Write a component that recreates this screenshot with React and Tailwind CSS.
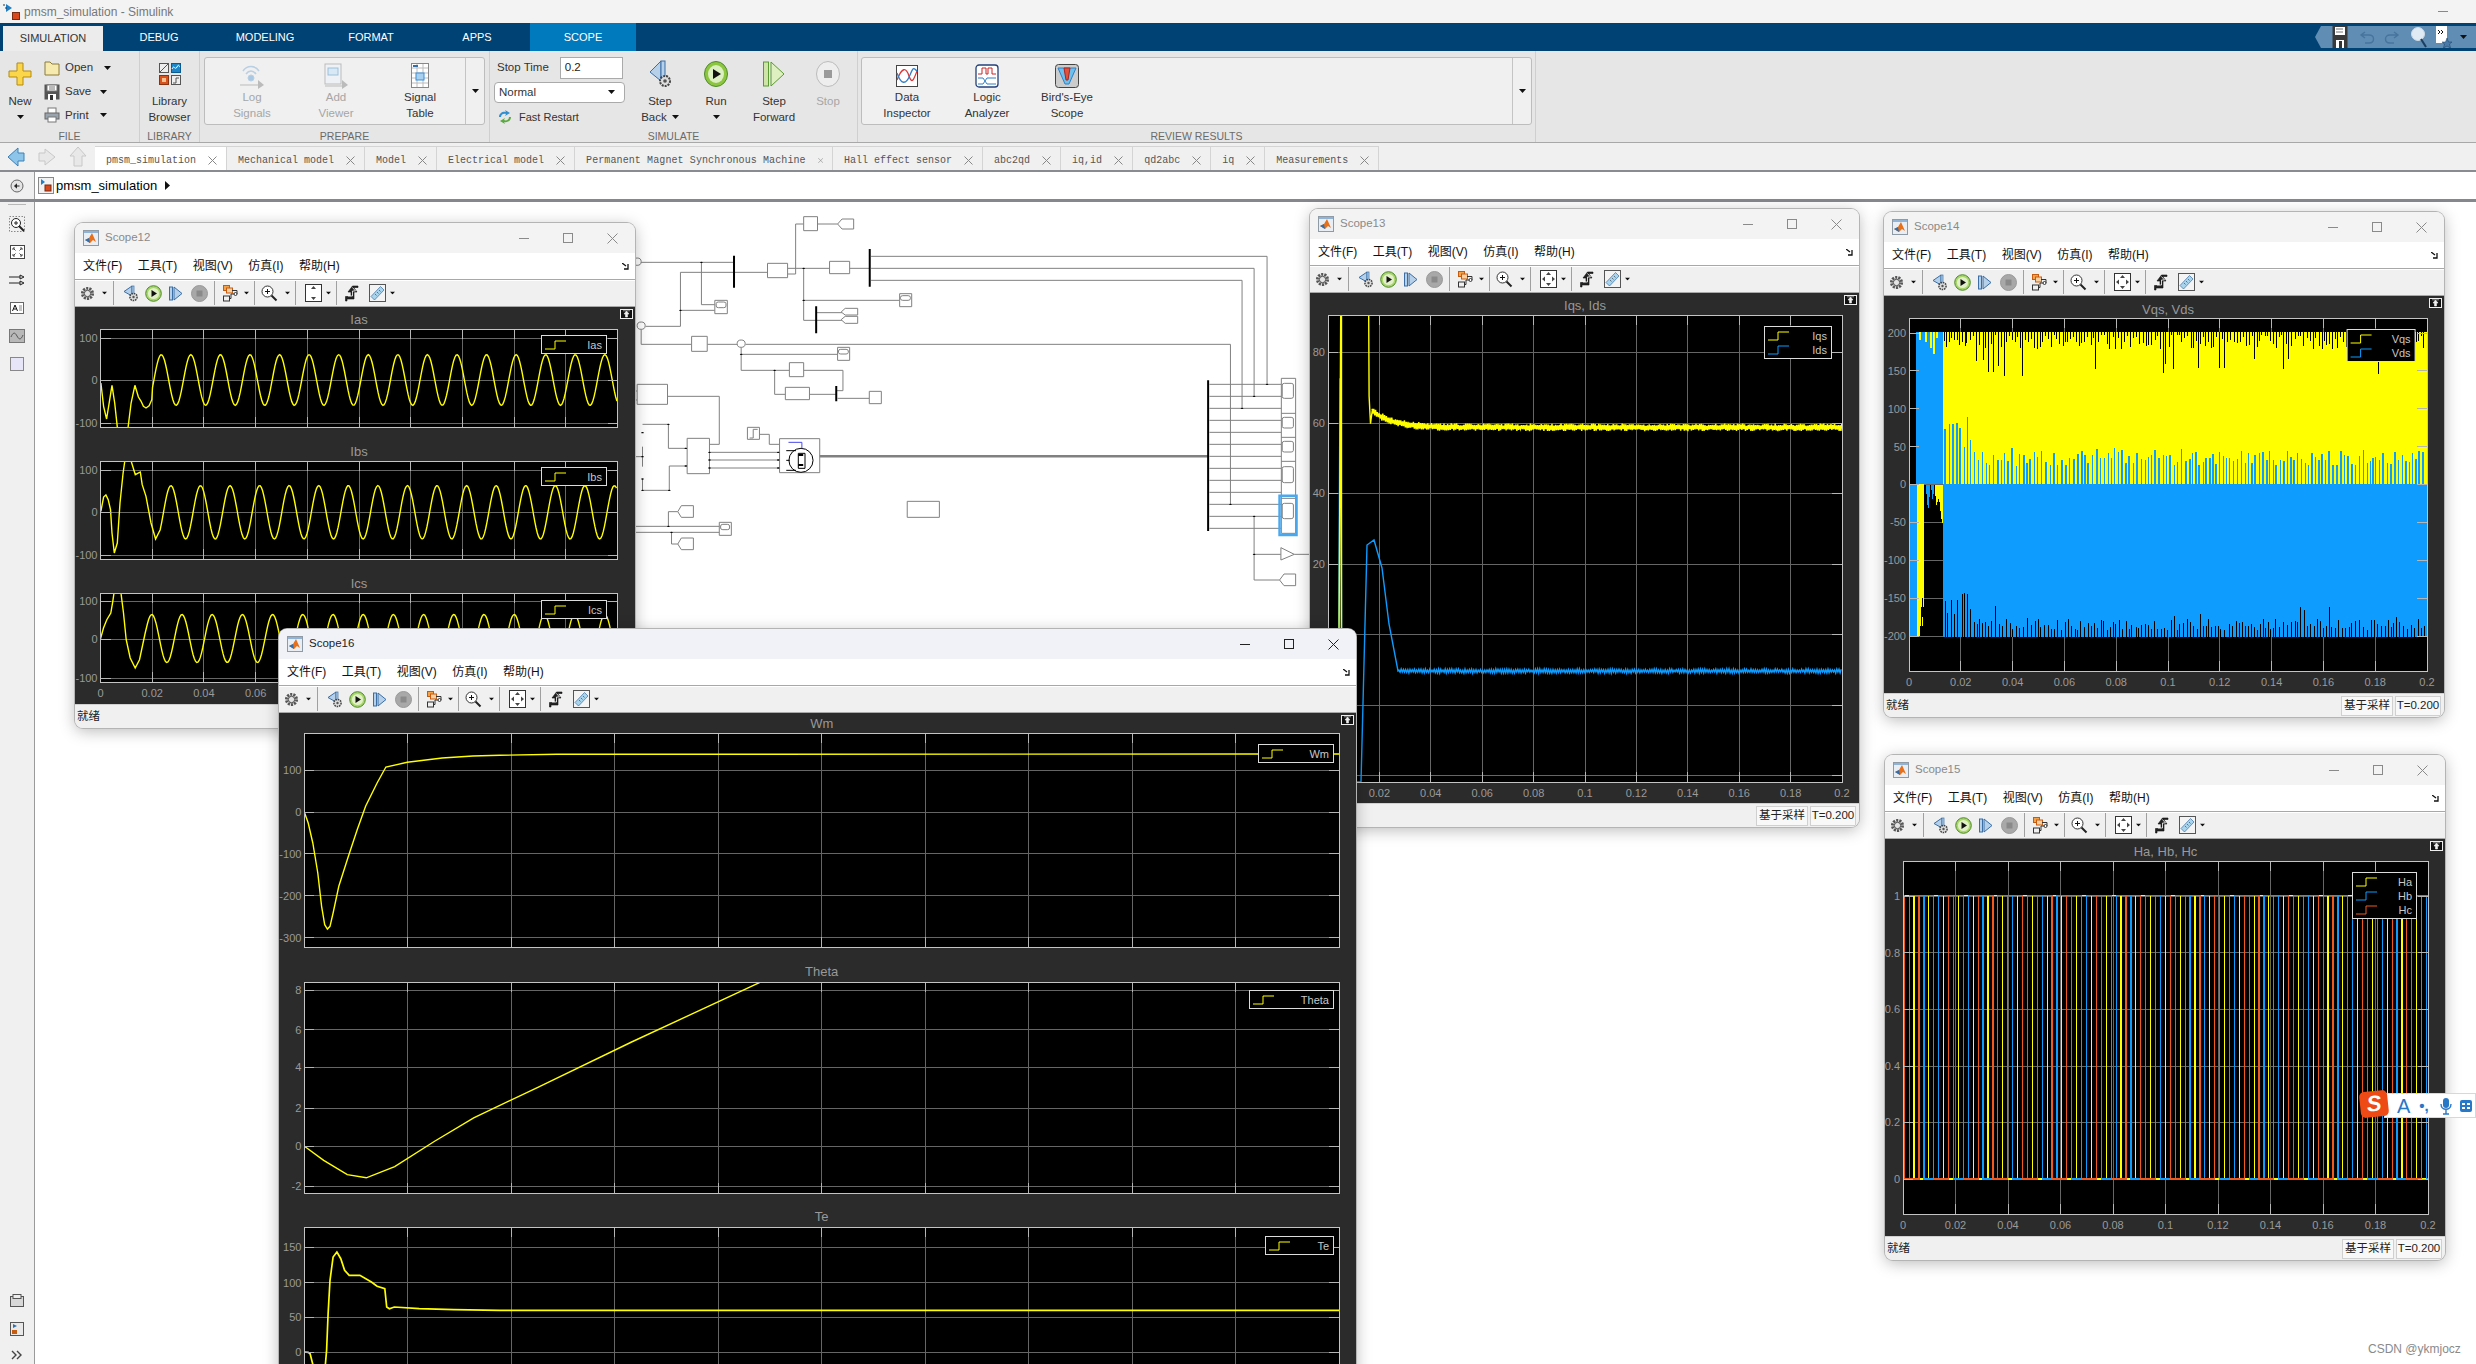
import { useMemo } from "react";

const YEL = "#ffff00";
const BLU = "#0f9cff";
const ORG = "#f05a1f";

// small seeded random so the noisy traces stay the same every render
const makeRand = (seed) => {
  let s = seed;
  return () => {
    s = (s * 16807) % 2147483647;
    return (s - 1) / 2147483646;
  };
};

const toPath = (pts) =>
  pts.map((p, i) => `${i ? "L" : "M"}${p[0].toFixed(1)} ${p[1].toFixed(1)}`).join("");

// points read from the reference crops -> plot coordinates
const conv = (arr, ox, oy, sx, sy) => arr.map(([x, y]) => [(x - ox) / sx, (y - oy) / sy]);

const sine = (start, end, x0, T, c, a) => {
  const out = [];
  for (let x = start; x <= end; x += 1.2) {
    out.push([x, c - a * Math.cos((2 * Math.PI * (x - x0)) / T)]);
  }
  return out;
};

const iasPath = toPath([
  ...conv([[107, 520], [114, 590], [122, 628], [130, 570], [136, 527], [143, 580], [150, 652], [150, 670], [178, 670], [178, 652], [186, 580], [196, 527], [205, 562], [212, 575], [218, 590], [225, 595], [233, 588], [240, 570]], 106, 358, 2.613, 3),
  ...sine(52, 517, 60.8, 29.57, 51, 25.3),
]);
const ibsPath = toPath([
  ...conv([[107, 905], [114, 862], [120, 856], [126, 870], [132, 900], [136, 970], [142, 1030], [150, 1000], [157, 880], [165, 790], [170, 750], [185, 750], [197, 795], [210, 787], [215, 825], [225, 860], [238, 940], [250, 988], [262, 960]], 106, 754, 2.613, 3),
  ...sine(60, 517, 70.4, 29.57, 51.3, 26.7),
]);
const icsPath = toPath([
  ...conv([[91, 237], [100, 205], [110, 180], [122, 160], [128, 125], [132, 96], [152, 96], [160, 160], [168, 240], [180, 295], [195, 325], [208, 300], [225, 220]], 91, 100, 3, 3),
  ...sine(47, 517, 51.3, 30.2, 45.5, 24),
]);

const wmPath = toPath(
  conv([[90, 578], [100, 610], [112, 670], [125, 760], [135, 860], [143, 915], [150, 928], [157, 920], [165, 880], [180, 800], [205, 710], [228, 630], [250, 560], [280, 490], [303, 442], [359, 428], [450, 415], [530, 409], [600, 407], [750, 404], [2800, 403]], 90, 340, 2.613, 3)
);
const thetaPath = toPath(
  conv([[192.8, 726], [205, 735], [220, 744], [232, 746], [250, 739], [275, 723], [300, 708], [340, 689], [400, 660], [484, 621], [500, 613]], 192.8, 622, 0.6333, 0.6333)
);
const tePath = toPath(
  conv([[90, 515], [100, 516], [105, 520], [112, 552], [120, 700], [140, 700], [145, 552], [148, 510], [152, 400], [157, 300], [165, 230], [175, 215], [185, 235], [195, 270], [207, 285], [235, 285], [265, 305], [280, 318], [300, 325], [305, 380], [312, 385], [325, 380], [390, 385], [480, 388], [600, 390], [2800, 390]], 90, 140, 2.613, 3)
);

const iqsPath = () => {
  const r = makeRand(71);
  const pts = conv([[108, 1400], [113, 346], [115, 1400], [115, 346], [190, 346], [191, 590], [195, 672], [200, 630]], 78, 346, 2.75, 3);
  for (let x = 44, i = 0; x < 514; x += 0.9, i++) {
    const base = 112.4 - 17 * Math.exp(-(x - 44) / 20);
    pts.push([x, base + (i % 2 ? 1 : -1) * (1.6 + r() * 2.2)]);
  }
  return toPath(pts);
};

const idsPath = () => {
  const r = makeRand(33);
  const pts = [[10, 467], [12, 64], [13, 64], [14, 467], [33, 467], [39, 230], [46, 225], [54, 253], [61, 309], [70, 356]];
  for (let x = 71, i = 0; x < 514; x += 1.1, i++) {
    pts.push([x, 356 + (i % 2 ? 1 : -1) * (0.8 + r() * 1.4)]);
  }
  return toPath(pts);
};

// Vqs, Vds drawn as stripes: the real trace is just a blur of switching
const VqsTrace = () => {
  const { black, spikes, lower } = useMemo(() => {
    const r = makeRand(11);
    const black = [];
    const spikes = [];
    const lower = [];
    for (let x = 35; x < 517; x += 1.9 + r() * 1.7) {
      const big = r() > 0.9;
      black.push(`M${x.toFixed(1)} 14V${(14 + (big ? 22 + r() * 22 : 3 + r() * 14)).toFixed(1)}`);
    }
    for (let x = 36; x < 517; x += 2.6 + r() * 2) {
      const h = x < 62 ? 30 + r() * 42 : 18 + r() * 18;
      spikes.push(`M${x.toFixed(1)} 166V${(166 - h).toFixed(1)}`);
    }
    for (let x = 36; x < 517; x += 2.3 + r() * 2) {
      const h = x < 62 ? 18 + r() * 28 : 6 + r() * (r() > 0.85 ? 26 : 12);
      lower.push(`M${x.toFixed(1)} 318.5V${(318.5 - h).toFixed(1)}`);
    }
    return { black: black.join(""), spikes: spikes.join(""), lower: lower.join("") };
  }, []);
  return (
    <g shapeRendering="crispEdges">
      <rect x="34" y="14.3" width="484" height="152" fill={YEL} />
      <path d={black} stroke="#000" strokeWidth="1" />
      <path d={spikes} stroke={BLU} strokeWidth="1.5" />
      <rect x="34" y="166" width="484" height="152.5" fill={BLU} />
      <path d={lower} stroke="#000" strokeWidth="1" />
      <rect x="6.5" y="14.3" width="27.5" height="152" fill={BLU} />
      <path d="M11 14V22M17 14V24M22 14V30M25 14V36M28 14V20" stroke={YEL} strokeWidth="1.2" />
      <path d="M0.5 35V166" stroke={YEL} strokeWidth="1" />
      <rect x="0" y="166" width="8" height="152.5" fill={BLU} />
      <path d="M8 166H15V280L13 318H8Z" fill={YEL} />
      <path d="M14 280L13 318H11L13 280Z" fill="#000" />
      <path d="M17 167H21L20 192L18 185ZM22 167H25L24 185Z" fill={BLU} />
      <path d="M26 167H34V205H33L30 180L27 188Z" fill={YEL} />
    </g>
  );
};

const hallWave = (offset, start) => {
  const half = 14.785;
  let level = start;
  let d = `M0 ${level ? 34.7 : 318}`;
  for (let x = offset; x < 525; x += half) {
    d += `H${x.toFixed(1)}`;
    level = !level;
    d += `V${level ? 34.7 : 318}`;
  }
  return d + "H525";
};

const Plot = ({ id, w, h, px, py, pw, ph, title, titleY, yTicks, xLabels, legend, lx, ly, lw, children }) => {
  const divX = Array.from({ length: 9 }, (_, i) => px + (pw * (i + 1)) / 10);
  return (
    <svg width={w} height={h} className="block shrink-0" fontFamily="Liberation Sans, sans-serif">
      <defs>
        <clipPath id={id}>
          <rect x={px} y={py} width={pw} height={ph} />
        </clipPath>
      </defs>
      <text x={px + pw / 2} y={titleY} fontSize="13" fill="#999" textAnchor="middle">{title}</text>
      <rect x={px} y={py} width={pw} height={ph} fill="#000" />
      <g stroke="#666" shapeRendering="crispEdges">
        {divX.map((x) => <line key={x} x1={x} x2={x} y1={py} y2={py + ph} />)}
        {yTicks.map((t) => <line key={t[0]} x1={px} x2={px + pw} y1={py + t[1]} y2={py + t[1]} />)}
      </g>
      <g clipPath={`url(#${id})`} fill="none">
        <g transform={`translate(${px} ${py})`}>{children}</g>
      </g>
      <g stroke="#b5b5b5" shapeRendering="crispEdges">
        {divX.map((x) => (
          <g key={x}>
            <line x1={x} x2={x} y1={py} y2={py + 10} />
            <line x1={x} x2={x} y1={py + ph - 10} y2={py + ph} />
          </g>
        ))}
        {yTicks.map((t) => (
          <g key={t[0]}>
            <line x1={px} x2={px + 10} y1={py + t[1]} y2={py + t[1]} />
            <line x1={px + pw - 10} x2={px + pw} y1={py + t[1]} y2={py + t[1]} />
          </g>
        ))}
        <rect x={px} y={py} width={pw} height={ph} fill="none" stroke="#c4c4c4" />
      </g>
      <g fontSize="11" fill="#9a9a9a">
        {yTicks.map((t) => (
          <text key={t[0]} x={px - 3} y={py + t[1] + 4} textAnchor="end">{t[0]}</text>
        ))}
        {xLabels &&
          ["0", "0.02", "0.04", "0.06", "0.08", "0.1", "0.12", "0.14", "0.16", "0.18", "0.2"].map((l, i) => (
            <text key={l} x={px + (pw * i) / 10} y={py + ph + 15} textAnchor="middle">{l}</text>
          ))}
      </g>
      {legend && (
        <g>
          <rect x={lx + 0.5} y={ly + 0.5} width={lw} height={4 + legend.length * 14} fill="#000" stroke="#dcdcdc" />
          {legend.map((l, i) => {
            const y = ly + 10 + i * 14;
            return (
              <g key={l[0]}>
                <path d={`M${lx + 4} ${y + 4}H${lx + 14}V${y - 4}H${lx + 25}`} stroke={l[1]} fill="none" />
                <text x={lx + lw - 4} y={y + 4} fontSize="11" fill="#c8c8c8" textAnchor="end">{l[0]}</text>
              </g>
            );
          })}
        </g>
      )}
    </svg>
  );
};

const Trace = ({ d, color = YEL, width = 1.4 }) => <path d={d} stroke={color} strokeWidth={width} strokeLinejoin="miter" />;

const Caret = ({ className = "" }) => (
  <svg width="7" height="4" viewBox="0 0 7 4" className={className}>
    <path d="M0 0H7L3.5 4Z" fill="#111" />
  </svg>
);

const MatlabIcon = () => (
  <svg width="16" height="16" viewBox="0 0 16 16">
    <rect x="0.5" y="0.5" width="15" height="15" fill="#e8eef4" stroke="#8e9aa6" />
    <rect x="1" y="1" width="14" height="2" fill="#8fb4d8" />
    <path d="M2 10L6 8L9 3L13 12L10 10L7 13Z" fill="#e8701a" />
    <path d="M2 10L6 8L7 13Z" fill="#2f6fb0" />
  </svg>
);

const Gear = () => (
  <svg width="15" height="15" viewBox="0 0 16 16">
    <circle cx="8" cy="8" r="5.5" fill="#d0d0d0" stroke="#555" strokeWidth="3" strokeDasharray="2.2 1.2" />
    <circle cx="8" cy="8" r="3.4" fill="#e4e4e4" stroke="#444" />
  </svg>
);

const ToolBack = () => (
  <svg width="16" height="17" viewBox="0 0 16 17">
    <path d="M9 1V11L1 6.5Z" fill="#b6d0ea" stroke="#3a6ea5" />
    <rect x="9" y="1" width="2" height="10" fill="#b6d0ea" stroke="#3a6ea5" strokeWidth="0.7" />
    <circle cx="10.5" cy="12" r="3.6" fill="#ddd" stroke="#444" strokeWidth="1.5" strokeDasharray="1.6 0.8" />
    <circle cx="10.5" cy="12" r="1.2" fill="#555" />
  </svg>
);

const ToolPlay = () => (
  <svg width="17" height="17" viewBox="0 0 17 17">
    <circle cx="8.5" cy="8.5" r="7.8" fill="#a9d66a" stroke="#4f8a2c" />
    <circle cx="8.5" cy="8.5" r="5.6" fill="#e2f0c8" />
    <path d="M6.5 5L12 8.5L6.5 12Z" fill="#111" />
  </svg>
);

const ToolStep = () => (
  <svg width="14" height="15" viewBox="0 0 14 15">
    <rect x="0.5" y="1" width="3" height="13" fill="#b6d0ea" stroke="#3a6ea5" />
    <path d="M5 1L13 7.5L5 14Z" fill="#b6d0ea" stroke="#3a6ea5" />
  </svg>
);

const ToolStop = () => (
  <svg width="17" height="17" viewBox="0 0 17 17">
    <circle cx="8.5" cy="8.5" r="8" fill="#a8a8a8" stroke="#999" />
    <rect x="5.5" y="5.5" width="6" height="6" fill="#8a8a8a" />
  </svg>
);

const ToolBlocks = () => (
  <svg width="17" height="17" viewBox="0 0 17 17" fill="none">
    <rect x="1.5" y="0.5" width="6" height="5" fill="#f4a24a" stroke="#c55a11" />
    <rect x="4.5" y="3" width="6" height="5" fill="#f8d0a0" stroke="#c55a11" />
    <rect x="1.5" y="11" width="6" height="5" stroke="#333" />
    <path d="M10 5.5H15V9H9M9 9V13.5H7.5" stroke="#333" />
    <circle cx="13.5" cy="9" r="1.5" fill="#fff" stroke="#333" />
  </svg>
);

const ToolZoom = () => (
  <svg width="17" height="17" viewBox="0 0 17 17" fill="none">
    <circle cx="6.5" cy="6.5" r="5.5" fill="#fff" stroke="#333" />
    <path d="M4 6.5H9M6.5 4V9" stroke="#111" />
    <path d="M10.5 10.5L15.5 15.5" stroke="#222" strokeWidth="2" />
  </svg>
);

const ToolFit = ({ vertical }) => (
  <svg width="17" height="18" viewBox="0 0 17 18">
    <rect x="0.5" y="0.5" width="16" height="17" fill="#fff" stroke="#333" />
    <path d="M8.5 2L6 5H11ZM8.5 16L6 13H11Z" fill="#444" />
    {!vertical && <path d="M2 9L5 6.5V11.5ZM15 9L12 6.5V11.5Z" fill="#444" />}
  </svg>
);

const ToolTrigger = () => (
  <svg width="14" height="17" viewBox="0 0 14 17">
    <path d="M7.5 1H13V2.5H9V3L12 7H9V14H2V16H0.5V11.5H6V7H3Z" fill="#222" stroke="#111" strokeWidth="0.6" />
    <path d="M7.5 2.5L10.5 6H7.5V11H3" stroke="#fff" strokeWidth="0.8" fill="none" />
  </svg>
);

const ToolRuler = () => (
  <svg width="17" height="18" viewBox="0 0 17 18">
    <rect x="0.5" y="0.5" width="16" height="17" fill="#f4f4f4" stroke="#555" />
    <path d="M2 12.5L11.5 2.5L15 6L5.5 16Z" fill="#a8d4ee" stroke="#3a6ea5" strokeWidth="0.7" />
    <path d="M6 10L7.5 11.5M8 8L9.5 9.5M10 6L11.5 7.5" stroke="#333" strokeWidth="0.6" />
  </svg>
);

const Sep = ({ className }) => <div className={`h-[24px] w-px bg-[#a0a0a0] ${className}`} />;

const ScopeToolbar = ({ vertical }) => (
  <div className="flex h-[27px] shrink-0 items-center border-b border-[#a8a8a8] bg-[#f0f0f0] shadow-[inset_0_1px_0_#fff]">
    <div className="flex w-[24px] justify-center"><Gear /></div>
    <Caret className="ml-[2px] scale-75" />
    <Sep className="ml-[5px]" />
    <div className="ml-[6px] flex w-[22px] justify-center"><ToolBack /></div>
    <div className="flex w-[22px] justify-center"><ToolPlay /></div>
    <div className="flex w-[24px] justify-center"><ToolStep /></div>
    <div className="flex w-[22px] justify-center"><ToolStop /></div>
    <Sep className="ml-[4px]" />
    <div className="ml-[5px] flex w-[20px] justify-center"><ToolBlocks /></div>
    <Caret className="ml-[3px] scale-75" />
    <Sep className="ml-[4px]" />
    <div className="ml-[3px] flex w-[22px] justify-center"><ToolZoom /></div>
    <Caret className="ml-[4px] scale-75" />
    <Sep className="ml-[4px]" />
    <div className="ml-[6px] flex w-[22px] justify-center"><ToolFit vertical={vertical} /></div>
    <Caret className="ml-[1px] scale-75" />
    <Sep className="ml-[4px]" />
    <div className="ml-[5px] flex w-[20px] justify-center"><ToolTrigger /></div>
    <div className="ml-[4px] flex w-[22px] justify-center"><ToolRuler /></div>
    <Caret className="ml-[1px] scale-75" />
  </div>
);

const Undock = () => (
  <svg width="13" height="10" viewBox="0 0 13 10" className="absolute right-[2px] top-[2px]">
    <rect x="0.5" y="0.5" width="12" height="9" fill="#111" stroke="#eee" />
    <path d="M6.5 2L4 5H5.5V8H7.5V5H9ZM3 1.8H10" stroke="#eee" strokeWidth="0.6" fill="#eee" />
  </svg>
);

const menus = ["文件(F)", "工具(T)", "视图(V)", "仿真(I)", "帮助(H)"];

const ScopeWindow = ({ className, title, active, vertical, status = true, children }) => (
  <div className={`absolute flex flex-col overflow-hidden rounded-lg bg-[#f0f0f0] shadow-[0_3px_16px_rgba(0,0,0,0.28)] ring-1 ring-[#b4b4b4] ${className}`}>
    <div className={`flex h-[30px] shrink-0 items-center pl-[8px] pr-[17px] ${active ? "bg-[#f0f2f8]" : "bg-[#f3f3f3]"}`}>
      <MatlabIcon />
      <span className={`ml-[6px] text-[11.5px] ${active ? "text-[#222]" : "text-[#8a8a8a]"}`}>{title}</span>
      <div className={`ml-auto flex items-center gap-[34px] ${active ? "text-[#222]" : "text-[#8a8a8a]"}`}>
        <span className="h-px w-[10px] bg-current" />
        <span className="h-[10px] w-[10px] border border-current" />
        <svg width="11" height="11" viewBox="0 0 11 11" stroke="currentColor"><path d="M0.5 0.5L10.5 10.5M10.5 0.5L0.5 10.5" /></svg>
      </div>
    </div>
    <div className="relative flex h-[27px] shrink-0 items-center gap-[15.5px] border-b border-[#a8a8a8] bg-white pl-[8px] text-[12px] text-[#111]">
      {menus.map((m) => <span key={m}>{m}</span>)}
      <svg width="8" height="7" viewBox="0 0 8 7" className="absolute right-[5px] top-[10px]">
        <path d="M0 0L4 3M6 1V6H2" stroke="#111" fill="none" strokeWidth="1.3" />
      </svg>
    </div>
    <ScopeToolbar vertical={vertical} />
    <div className="relative flex min-h-0 flex-1 flex-col overflow-hidden bg-[#2b2b2b]">
      <Undock />
      {children}
    </div>
    {status && (
      <div className="flex h-[24px] shrink-0 items-center border-t border-[#d0d0d0] bg-[#f0f0f0] pl-[2px] pr-[3px] text-[11.5px] text-[#222]">
        <span>就绪</span>
        <span className="ml-auto flex h-[20px] w-[52px] items-center justify-center border border-[#d0d0d0] bg-[#f8f8f8]">基于采样</span>
        <span className="ml-[2px] flex h-[20px] w-[46px] items-center justify-center border border-[#d0d0d0] bg-[#f8f8f8]">T=0.200</span>
      </div>
    )}
  </div>
);

// block diagram, coordinates are the ones read off the 1568x1260 crop
const lines = [
  "M12 187H233M160 187V314H190",
  "M113 217H308M113 217V379H35M113 331H190",
  "M353 222H371V72H389M420 72H465",
  "M353 205H447M492 205H537",
  "M540 169H1427V553M540 205H1398V589M540 241H1371V625",
  "M389 205V361H417M389 301H604M417 338H475M417 361H475",
  "M25 388V433H138M173 433H240M259 433H1345V913",
  "M249 442V511H357M249 463H465M324 511V583H348M389 511H477V572H462M402 583H462M465 595H536",
  "M84 589H200V733H178M12 573H16M12 600H16",
  "M28 673H86V745H128M12 770H28M28 740V800M28 871H88V798H128M28 837V871",
  "M178 757H335M178 780H335M178 804H335M290 703H312V733H335",
  "M1298 553H1459M1298 589H1459M1298 625H1459M1298 661H1459M1298 697H1459M1298 733H1459M1298 769H1459M1298 805H1459M1298 841H1459M1298 877H1459M1298 913H1459M1298 949H1459M1298 985H1459",
  "M1398 949V1140H1455M1398 1063H1458M1488 1063H1530",
  "M12 979H200M12 997H200M86 979V935H107M93 997V1032H107",
];

const boxes = [
  [308, 190, 45, 43], [389, 50, 31, 42], [447, 184, 45, 37], [190, 301, 28, 40], [604, 281, 27, 39],
  [138, 409, 35, 45], [465, 442, 27, 39], [357, 488, 32, 42], [348, 562, 54, 37], [536, 574, 27, 37],
  [16, 553, 68, 60], [128, 715, 50, 106], [263, 682, 27, 36], [335, 716, 90, 102], [200, 967, 27, 39],
  [621, 904, 72, 48], [1459, 535, 32, 465],
];

const scopeInner = [
  [193, 306, 22, 17], [606, 287, 22, 14], [467, 448, 22, 14], [203, 973, 20, 16],
  [1461, 550, 25, 45], [1461, 652, 25, 32], [1461, 724, 25, 32], [1461, 800, 25, 48], [1461, 910, 25, 46],
];

const dots = [
  [160, 187], [113, 331], [389, 205], [389, 301], [249, 463], [324, 511], [1427, 553], [1398, 589], [1371, 625],
  [1345, 913], [1398, 949], [1398, 1063], [86, 979], [93, 997], [28, 698], [28, 770], [28, 837], [28, 871],
  [86, 673], [88, 871], [125, 745], [125, 798], [178, 757], [178, 780], [178, 804], [332, 757], [332, 780], [332, 804],
];

const tags = [
  "M465 72L475 57H501V87H475Z", "M473 336L482 325H510V345H482Z", "M473 359L482 349H510V370H482Z",
  "M107 935L115 917H142V952H115Z", "M107 1032L115 1014H142V1049H115Z", "M1455 1140L1465 1122H1491V1157H1465Z",
  "M1458 1043L1488 1063L1458 1080Z",
];

const Diagram = () => (
  <svg viewBox="0 0 1568 1260" preserveAspectRatio="none" className="absolute left-[630px] top-[200px] h-[420px] w-[700px]" fill="none">
    <g stroke="#808080">
      {lines.map((d) => <path key={d} d={d} vectorEffect="non-scaling-stroke" />)}
      {boxes.map((b) => <rect key={b.join()} x={b[0]} y={b[1]} width={b[2]} height={b[3]} fill="#fff" vectorEffect="non-scaling-stroke" />)}
      {scopeInner.map((b) => <rect key={b.join()} x={b[0]} y={b[1]} width={b[2]} height={b[3]} rx="5" vectorEffect="non-scaling-stroke" />)}
      {tags.map((d) => <path key={d} d={d} fill="#fff" vectorEffect="non-scaling-stroke" />)}
      {[[16, 185], [25, 377], [249, 431]].map((c) => <ellipse key={c[0]} cx={c[0]} cy={c[1]} rx="9" ry="11" fill="#fff" vectorEffect="non-scaling-stroke" />)}
      <path d="M1459 640H1491M1459 712H1491M1459 784H1491M1459 895H1491" vectorEffect="non-scaling-stroke" />
      <path d="M425 769H1295" strokeWidth="2.5" vectorEffect="non-scaling-stroke" />
      <path d="M268 714H276V688H286" vectorEffect="non-scaling-stroke" />
    </g>
    <g stroke="#000">
      <path d="M233 167V263M537 147V260M417 319V400M462 558V604M1295 541V993" strokeWidth="2" vectorEffect="non-scaling-stroke" />
      <ellipse cx="383" cy="781" rx="27" ry="36" fill="#fff" vectorEffect="non-scaling-stroke" />
      <rect x="377" y="760" width="15" height="45" vectorEffect="non-scaling-stroke" />
      <path d="M350 752H372M350 781H358M350 811H372" vectorEffect="non-scaling-stroke" />
    </g>
    <path d="M377 765H388M377 795H388" stroke="#000" strokeWidth="2" vectorEffect="non-scaling-stroke" />
    <path d="M355 727H385V745" stroke="#4a4ae8" vectorEffect="non-scaling-stroke" />
    <g fill="#000">
      {dots.map((d) => <ellipse key={d.join()} cx={d[0]} cy={d[1]} rx="3" ry="2" />)}
    </g>
    <rect x="1455" y="887" width="38" height="118" stroke="#4aa8ee" strokeWidth="2.5" vectorEffect="non-scaling-stroke" />
  </svg>
);

const RibbonBtn = ({ width, icon, lines: textLines, caret, lastCaret, muted, top = "h-[42px] pt-[4px]" }) => (
  <div className={`flex flex-col items-center leading-[16px] ${width} ${muted ? "text-[#a6a6a6]" : "text-[#333]"}`}>
    <div className={`flex shrink-0 items-center justify-center ${top}`}>{icon}</div>
    {textLines.map((l, i) => (
      <span key={l} className="flex items-center gap-[5px] whitespace-nowrap">
        {l}
        {lastCaret && i === textLines.length - 1 && <Caret />}
      </span>
    ))}
    {caret && <Caret className="mt-[6px]" />}
  </div>
);

const Group = ({ label, className, children }) => (
  <div className={`flex shrink-0 flex-col border-r border-[#cfcfcf] ${className}`}>
    <div className="flex h-[76px] shrink-0">{children}</div>
    <div className="mt-auto flex h-[15px] items-center justify-center pt-[4px] text-[10.5px] text-[#6a6a6a]">{label}</div>
  </div>
);

const GalleryScroll = () => (
  <div className="ml-auto flex w-[19px] items-center justify-center border-l border-[#c4c4c4]"><Caret /></div>
);

const FileRow = ({ icon, label, caretClass }) => (
  <div className="flex h-[24px] items-center">
    <div className="flex w-[18px] justify-center">{icon}</div>
    <span className="ml-[4px] w-[26px]">{label}</span>
    <Caret className={caretClass} />
  </div>
);

const tabs = ["pmsm_simulation", "Mechanical model", "Model", "Electrical model", "Permanent Magnet Synchronous Machine", "Hall effect sensor", "abc2qd", "iq,id", "qd2abc", "iq", "Measurements"];

const SideIcon = ({ children, className = "" }) => <div className={`flex w-[34px] justify-center ${className}`}>{children}</div>;

const Sidebar = () => (
  <div className="relative flex w-[35px] shrink-0 flex-col border-r border-[#9a9a9a] bg-[#f0f0f0] pt-[2px]">
    <div className="mx-[8px] h-px bg-[#b8b8b8]" />
    <SideIcon className="mt-[11px]">
      <svg width="16" height="16" viewBox="0 0 16 16" fill="none">
        <rect x="0.5" y="0.5" width="15" height="15" stroke="#888" strokeDasharray="1.5 1.5" />
        <circle cx="7" cy="7" r="4.5" fill="#fff" stroke="#222" />
        <path d="M5 7H9M7 5V9" stroke="#222" />
        <path d="M10 10L15 15" stroke="#222" strokeWidth="2" />
      </svg>
    </SideIcon>
    <SideIcon className="mt-[13px]">
      <svg width="15" height="14" viewBox="0 0 15 14" fill="#fff" stroke="#444">
        <rect x="0.5" y="0.5" width="14" height="13" />
        <path d="M3 5V3H5M12 5V3H10M3 9V11H5M12 9V11H10M3.5 3.5L5.5 5.5M11.5 3.5L9.5 5.5M3.5 10.5L5.5 8.5M11.5 10.5L9.5 8.5" fill="none" />
      </svg>
    </SideIcon>
    <SideIcon className="mt-[15px]">
      <svg width="16" height="12" viewBox="0 0 16 12" fill="none" stroke="#222">
        <path d="M0 3H11M0 9H11" />
        <path d="M11 1V5L15 3ZM11 7V11L15 9Z" fill="#ddd" />
      </svg>
    </SideIcon>
    <SideIcon className="mt-[16px]">
      <svg width="14" height="12" viewBox="0 0 14 12">
        <rect x="0.5" y="0.5" width="13" height="11" fill="#fff" stroke="#666" />
        <path d="M2.5 9L5 3L7.5 9M3.5 7H6.5" stroke="#111" fill="none" />
        <path d="M9 4H12M9 6H12M9 8H12" stroke="#888" />
      </svg>
    </SideIcon>
    <SideIcon className="mt-[15px]">
      <svg width="16" height="14" viewBox="0 0 16 14">
        <rect x="0.5" y="0.5" width="15" height="13" fill="#b8b8b8" stroke="#777" />
        <path d="M2 8C4 3 6 3 8 7S12 11 14 6" fill="none" stroke="#555" />
      </svg>
    </SideIcon>
    <SideIcon className="mt-[14px]">
      <div className="h-[14px] w-[14px] border border-[#888] bg-[#e6e6f8]" />
    </SideIcon>
    <div className="mt-auto flex flex-col items-center gap-[14px] pb-[4px]">
      <svg width="14" height="14" viewBox="0 0 14 14">
        <rect x="0.5" y="2.5" width="13" height="10" fill="#d8d8d8" stroke="#555" />
        <rect x="3" y="0.5" width="8" height="4" fill="#eee" stroke="#555" />
      </svg>
      <svg width="14" height="14" viewBox="0 0 14 14">
        <rect x="0.5" y="0.5" width="13" height="13" fill="#e8e8e8" stroke="#555" />
        <rect x="2" y="8" width="5" height="4" fill="#c55a11" />
        <path d="M3 2V6L7 4Z" fill="#2f6fb0" />
      </svg>
      <svg width="12" height="10" viewBox="0 0 12 10" fill="none" stroke="#444" strokeWidth="1.4">
        <path d="M1 1L5 5L1 9M6 1L10 5L6 9" />
      </svg>
    </div>
  </div>
);

const Ribbon = () => (
  <div className="flex h-[92px] shrink-0 border-b border-[#a8a8a8] bg-[#e6e6e6] text-[11.5px] text-[#333]">
    <Group label="FILE" className="w-[140px]">
      <RibbonBtn
        width="w-[40px]"
        icon={
          <svg width="24" height="24" viewBox="0 0 24 24">
            <path d="M9 1H15V9H23V15H15V23H9V15H1V9H9Z" fill="#fbd64a" stroke="#b58a10" />
          </svg>
        }
        lines={["New"]}
        caret
      />
      <div className="ml-[3px] flex flex-col pt-[5px]">
        <FileRow
          label="Open"
          caretClass="ml-[13px]"
          icon={<svg width="16" height="16" viewBox="0 0 16 16"><path d="M1 2H6L8 4H15V15H1Z" fill="#f7eaaf" stroke="#8a7a3a" /></svg>}
        />
        <FileRow
          label="Save"
          caretClass="ml-[9px]"
          icon={<svg width="16" height="16" viewBox="0 0 16 16"><rect x="0.5" y="0.5" width="15" height="15" fill="#555" /><rect x="3" y="1" width="10" height="6" fill="#fff" stroke="#777" /><path d="M5 3H11M5 5H11" stroke="#777" /><rect x="4" y="10" width="8" height="6" fill="#fff" /><rect x="6" y="11" width="3" height="5" fill="#333" /></svg>}
        />
        <FileRow
          label="Print"
          caretClass="ml-[9px]"
          icon={<svg width="16" height="16" viewBox="0 0 16 16"><rect x="4" y="1" width="8" height="6" fill="#fff" stroke="#777" /><rect x="1" y="6" width="14" height="6" fill="#9aa4ae" stroke="#666" /><rect x="4" y="10" width="8" height="5" fill="#fff" stroke="#777" /></svg>}
        />
      </div>
    </Group>
    <Group label="LIBRARY" className="w-[60px]">
      <RibbonBtn
        width="w-full"
        icon={
          <svg width="22" height="22" viewBox="0 0 22 22">
            <rect x="0.5" y="0.5" width="9" height="9" fill="#eee" stroke="#555" />
            <path d="M1 9L9 1" stroke="#555" />
            <rect x="12.5" y="0.5" width="9" height="9" fill="#1c86c8" stroke="#0b5a90" />
            <path d="M13 6C15 1 16 8 18 4S20 4 21 4" stroke="#fff" fill="none" />
            <rect x="0.5" y="12.5" width="9" height="9" fill="#d9531e" stroke="#8a3310" />
            <rect x="3" y="15" width="4" height="4" fill="#f4c090" />
            <rect x="12.5" y="12.5" width="9" height="9" fill="#eee" stroke="#555" />
            <path d="M14 20H17V15H20" stroke="#555" fill="none" />
          </svg>
        }
        lines={["Library", "Browser"]}
      />
    </Group>
    <Group label="PREPARE" className="w-[290px] px-[4px]">
      <div className="mt-[6px] flex h-[68px] w-[283px] rounded-[3px] border border-[#bdbdbd] bg-[#f0f0f0]">
        <RibbonBtn
          width="ml-[22px] w-[50px]"
          top="h-[31px] pt-[4px]"
          muted
          lines={["Log", "Signals"]}
          icon={
            <svg width="26" height="26" viewBox="0 0 26 26" fill="none" stroke="#b9cfe3">
              <path d="M4 8C8 2 16 2 20 8M7 11C10 7 14 7 17 11" strokeWidth="1.5" />
              <circle cx="12" cy="15" r="3" fill="#a8c8e4" />
              <path d="M1 22H20" stroke="#bbb" />
              <path d="M19 17L25 22L19 26Z" fill="#bbb" stroke="none" />
            </svg>
          }
        />
        <RibbonBtn
          width="ml-[34px] w-[50px]"
          top="h-[31px] pt-[4px]"
          muted
          lines={["Add", "Viewer"]}
          icon={
            <svg width="26" height="26" viewBox="0 0 26 26" fill="none">
              <rect x="2" y="1" width="16" height="20" fill="#eef2f6" stroke="#bbb" />
              <rect x="5" y="5" width="10" height="7" fill="#d8e8f4" stroke="#9cc0dc" />
              <path d="M2 23H20" stroke="#bbb" />
              <path d="M19 17L25 22L19 26Z" fill="#bbb" />
            </svg>
          }
        />
        <RibbonBtn
          width="ml-[34px] w-[50px]"
          top="h-[31px] pt-[4px]"
          lines={["Signal", "Table"]}
          icon={
            <svg width="18" height="26" viewBox="0 0 18 26" fill="none">
              <rect x="0.5" y="0.5" width="17" height="24" fill="#fff" stroke="#888" />
              <path d="M1 5H17M1 10H17M1 15H17M1 20H17M6 1V24M12 1V24" stroke="#bbb" />
              <rect x="5" y="10" width="8" height="7" fill="#a8d0f0" stroke="#3a90d8" />
              <rect x="2" y="2" width="5" height="2" fill="#2f6fb0" />
            </svg>
          }
        />
        <GalleryScroll />
      </div>
    </Group>
    <Group label="SIMULATE" className="w-[368px]">
      <div className="flex w-[140px] shrink-0 flex-col pl-[4px] pt-[6px]">
        <div className="flex h-[22px] items-center">
          <span className="ml-[3px]">Stop Time</span>
          <div className="ml-[11px] flex h-[22px] w-[63px] items-center border border-[#aaa] bg-white pl-[4px] text-[#222]">0.2</div>
        </div>
        <div className="mt-[3px] flex h-[21px] w-[131px] items-center justify-between rounded-[4px] border border-[#aaa] bg-white pl-[4px] pr-[9px]">
          <span>Normal</span>
          <Caret />
        </div>
        <div className="mt-[5px] flex h-[20px] items-center">
          <svg width="16" height="16" viewBox="0 0 16 16" className="ml-[3px]">
            <path d="M2 8C2 4 6 2 9 3L8 1L13 4L8 7L9 5C7 4 4 5 4 8Z" fill="#2f8fd0" />
            <path d="M14 8C14 12 10 14 7 13L8 15L3 12L8 9L7 11C9 12 12 11 12 8Z" fill="#5aaa40" />
          </svg>
          <span className="ml-[6px] text-[11px]">Fast Restart</span>
        </div>
      </div>
      <RibbonBtn
        width="ml-[2px] w-[56px]"
        lines={["Step", "Back"]}
        lastCaret
        icon={
          <svg width="24" height="30" viewBox="0 0 24 30">
            <path d="M13 2V22L2 13Z" fill="#b6d0ea" stroke="#3a6ea5" />
            <rect x="13" y="2" width="4" height="20" fill="#b6d0ea" stroke="#3a6ea5" />
            <circle cx="17" cy="22" r="5" fill="#ddd" stroke="#444" strokeWidth="2" strokeDasharray="2 1" />
            <circle cx="17" cy="22" r="1.8" fill="#555" />
          </svg>
        }
      />
      <RibbonBtn
        width="w-[56px]"
        lines={["Run"]}
        caret
        icon={
          <svg width="24" height="26" viewBox="0 0 24 26">
            <ellipse cx="12" cy="13" rx="11.5" ry="12.5" fill="#8cc63f" stroke="#4f8a2c" />
            <ellipse cx="12" cy="13" rx="8" ry="9" fill="#dcefc0" />
            <path d="M9 8L17 13L9 18Z" fill="#111" />
          </svg>
        }
      />
      <RibbonBtn
        width="w-[60px]"
        lines={["Step", "Forward"]}
        icon={
          <svg width="22" height="26" viewBox="0 0 22 26">
            <rect x="0.5" y="1" width="5" height="24" fill="#cfe4a8" stroke="#5a9a30" />
            <path d="M8 1L21 13L8 25Z" fill="#dff0c0" stroke="#5a9a30" />
          </svg>
        }
      />
      <RibbonBtn
        width="w-[48px]"
        muted
        lines={["Stop"]}
        icon={
          <svg width="24" height="26" viewBox="0 0 24 26">
            <ellipse cx="12" cy="13" rx="11.5" ry="12.5" fill="#eee" stroke="#bbb" />
            <rect x="8" y="9" width="8" height="8" fill="#9a9a9a" />
          </svg>
        }
      />
    </Group>
    <Group label="REVIEW RESULTS" className="w-[678px] px-[3px]">
      <div className="mt-[6px] flex h-[68px] w-[671px] rounded-[3px] border border-[#bdbdbd] bg-[#f0f0f0]">
        <RibbonBtn
          width="ml-[15px] w-[60px]"
          top="h-[31px] pt-[4px]"
          lines={["Data", "Inspector"]}
          icon={
            <svg width="22" height="22" viewBox="0 0 22 22" fill="none">
              <rect x="0.5" y="0.5" width="21" height="21" fill="#fff" stroke="#444" />
              <path d="M1 15C6 2 10 2 13 11S18 14 21 6" stroke="#d33" strokeWidth="1.3" />
              <path d="M1 8C5 20 10 20 14 10S18 4 21 6" stroke="#2f7fc8" strokeWidth="1.3" />
            </svg>
          }
        />
        <RibbonBtn
          width="ml-[20px] w-[60px]"
          top="h-[31px] pt-[4px]"
          lines={["Logic", "Analyzer"]}
          icon={
            <svg width="24" height="24" viewBox="0 0 24 24" fill="none">
              <rect x="1" y="1" width="22" height="22" rx="3" fill="#fff" stroke="#23407a" strokeWidth="1.3" />
              <path d="M3 10H7V4H11V10H13V4H17V10H21" stroke="#c22" />
              <path d="M3 14H8L12 20H21M3 20H8L12 14H21" stroke="#2f7fc8" />
            </svg>
          }
        />
        <RibbonBtn
          width="ml-[20px] w-[60px]"
          top="h-[31px] pt-[4px]"
          lines={["Bird's-Eye", "Scope"]}
          icon={
            <svg width="24" height="24" viewBox="0 0 24 24">
              <rect x="0.5" y="0.5" width="23" height="23" rx="3" fill="#ccc" stroke="#444" />
              <path d="M3 4H21L14 20H10Z" fill="#6cc0ec" stroke="#2f7fc8" />
              <path d="M9 4H15L13 16H11Z" fill="#e0523a" stroke="#a22" />
            </svg>
          }
        />
        <GalleryScroll />
      </div>
    </Group>
  </div>
);

export default function App() {
  return (
    <div className="relative flex h-[1364px] w-[2476px] flex-col overflow-hidden bg-white [font-family:'Liberation_Sans','Noto_Sans_CJK_SC',sans-serif]">
      {/* title bar */}
      <div className="flex h-[23px] shrink-0 items-center bg-[#f3f3f3] pl-[3px] text-[12px] text-[#777]">
        <svg width="18" height="18" viewBox="0 0 18 18">
          <path d="M3 1V9L9 5Z" fill="#1f7fc8" />
          <path d="M2 5H4M1 1V3" stroke="#333" />
          <rect x="9.5" y="9.5" width="7" height="7" fill="#d8481c" stroke="#7a2a10" />
        </svg>
        <span className="ml-[3px]">pmsm_simulation - Simulink</span>
        <span className="ml-auto mr-[28px] h-px w-[10px] bg-[#888]" />
      </div>
      {/* ribbon tabs */}
      <div className="flex h-[28px] shrink-0 items-end bg-[#004274] pl-[3px] text-[11px] text-white">
        <div className="flex h-[25px] w-[100px] items-center justify-center bg-[#ececec] text-[#333]">SIMULATION</div>
        <div className="ml-[3px] flex h-[28px] w-[106px] items-center justify-center">DEBUG</div>
        <div className="flex h-[28px] w-[106px] items-center justify-center">MODELING</div>
        <div className="flex h-[28px] w-[106px] items-center justify-center">FORMAT</div>
        <div className="flex h-[28px] w-[106px] items-center justify-center">APPS</div>
        <div className="flex h-[28px] w-[106px] items-center justify-center bg-[#0079bd]">SCOPE</div>
        <div className="mb-[3px] ml-auto flex h-[22px] w-[161px] items-center gap-[7px] bg-[#5f8db4] pl-[17px] [clip-path:polygon(6px_0,100%_0,100%_100%,6px_100%,0_50%)]">
          <svg width="16" height="22" viewBox="0 0 16 22"><rect width="15" height="22" x="0.5" fill="#3a3a3a" /><rect x="3" y="1" width="10" height="8" fill="#fff" /><path d="M4 3H11M4 6H11" stroke="#777" /><rect x="4" y="14" width="8" height="8" fill="#fff" /><rect x="7" y="15" width="3" height="7" fill="#333" /></svg>
          <svg width="18" height="18" viewBox="0 0 18 18" fill="none" stroke="#47749c" strokeWidth="1.4" className="ml-[3px]"><path d="M7 4L3 7L7 10M3 7H11C17 7 17 15 11 15H7" /></svg>
          <svg width="18" height="18" viewBox="0 0 18 18" fill="none" stroke="#47749c" strokeWidth="1.4"><path d="M11 4L15 7L11 10M15 7H7C1 7 1 15 7 15H11" /></svg>
          <svg width="18" height="22" viewBox="0 0 18 22" fill="none" className="ml-[2px]"><circle cx="8" cy="8" r="6.5" fill="#dfeaf4" stroke="#cfdbe6" /><path d="M11 13L16 21" stroke="#1c3f60" strokeWidth="2" /></svg>
          <svg width="18" height="22" viewBox="0 0 18 22"><rect x="1" y="0" width="11" height="17" fill="#fff" /><path d="M3 4L5 6L3 8M6 4L8 6L6 8" stroke="#111" fill="none" /><path d="M12 12L13.5 16H17L14.5 18L15.5 22L12 20L8.5 22L9.5 18L7 16H10.5Z" fill="#4a7aa8" stroke="#1c3f60" strokeWidth="0.5" /></svg>
          <Caret />
        </div>
      </div>
      <Ribbon />
      {/* editor tabs */}
      <div className="flex h-[29px] shrink-0 items-end border-b-2 border-[#888c92] bg-[#f0f0f0]">
        <div className="flex h-[27px] w-[95px] shrink-0 items-center pl-[7px]">
          <svg width="18" height="22" viewBox="0 0 18 22"><path d="M1 11L11 2V7H17V15H11V20Z" fill="#8dc4ea" stroke="#3a80b8" /></svg>
          <svg width="18" height="20" viewBox="0 0 18 20" className="ml-[13px]"><path d="M17 10L7 2V6H1V14H7V18Z" fill="#e8e8e8" stroke="#c8c8c8" /></svg>
          <svg width="18" height="22" viewBox="0 0 18 22" className="ml-[13px]"><path d="M9 1L17 10H13V20H5V10H1Z" fill="#e8e8e8" stroke="#c8c8c8" /></svg>
        </div>
        {tabs.map((t, i) => (
          <div
            key={t}
            className={`flex h-[24px] shrink-0 items-center gap-[12px] whitespace-nowrap border-r border-t border-[#d4d4d4] pl-[11px] pr-[9px] pt-[3px] [font-family:'Liberation_Mono',monospace] text-[10px] text-[#555] ${i === 0 ? "bg-white" : "bg-[#f0f0f0]"} ${i === 4 ? "w-[258px] justify-between" : ""}`}
          >
            <span className={i === 4 ? "tracking-[0.1px]" : ""}>{t}</span>
            <svg width="9" height="9" viewBox="0 0 9 9" stroke="#888"><path d="M0.5 0.5L8.5 8.5M8.5 0.5L0.5 8.5" /></svg>
          </div>
        ))}
      </div>
      {/* breadcrumb */}
      <div className="flex h-[30px] shrink-0 items-center border-b-[3px] border-[#84888e] bg-white text-[13px] text-black">
        <div className="flex h-full w-[35px] shrink-0 items-center justify-center border-r border-[#9a9a9a] bg-[#f0f0f0]">
          <svg width="14" height="14" viewBox="0 0 14 14" fill="none">
            <circle cx="7" cy="7" r="6" fill="#e4e4e4" stroke="#666" />
            <path d="M9.5 7H5M7 4.8L4.5 7L7 9.2" stroke="#222" fill="#222" />
          </svg>
        </div>
        <svg width="16" height="17" viewBox="0 0 16 17" className="ml-[3px]">
          <rect x="0.5" y="0.5" width="15" height="16" fill="#f2f2f2" stroke="#888" />
          <path d="M3 2V8L7 5Z" fill="#1f7fc8" />
          <rect x="7" y="8" width="6" height="6" fill="#d8481c" stroke="#7a2a10" />
        </svg>
        <span className="ml-[2px]">pmsm_simulation</span>
        <svg width="5" height="9" viewBox="0 0 5 9" className="ml-[8px]"><path d="M0 0L5 4.5L0 9Z" fill="#111" /></svg>
      </div>
      {/* canvas */}
      <div className="flex min-h-0 flex-1">
        <Sidebar />
        <div className="flex-1 bg-white" />
      </div>

      <Diagram />

      <ScopeWindow title="Scope12" vertical className="left-[75px] top-[223px] h-[505px] w-[560px]">
        <Plot id="ias" w={560} h={134} px={25.5} py={22} pw={517} ph={98} title="Ias" titleY={17} yTicks={[["100", 9], ["0", 51], ["-100", 94]]} legend={[["Ias", YEL]]} lx={466} ly={28} lw={65}>
          <Trace d={iasPath} />
        </Plot>
        <Plot id="ibs" w={560} h={134} px={25.5} py={20} pw={517} ph={98} title="Ibs" titleY={15} yTicks={[["100", 9], ["0", 51], ["-100", 94]]} legend={[["Ibs", YEL]]} lx={466} ly={26} lw={65}>
          <Trace d={ibsPath} />
        </Plot>
        <Plot id="ics" w={560} h={128} px={25.5} py={18} pw={517} ph={89} title="Ics" titleY={13} yTicks={[["100", 8], ["0", 46], ["-100", 85]]} xLabels legend={[["Ics", YEL]]} lx={466} ly={25} lw={65}>
          <Trace d={icsPath} />
        </Plot>
      </ScopeWindow>

      <ScopeWindow title="Scope13" className="left-[1310px] top-[209px] h-[618px] w-[549px]">
        <Plot id="iqs" w={549} h={510} px={18} py={22} pw={514} ph={467} title="Iqs, Ids" titleY={17} yTicks={[["80", 37], ["60", 108], ["40", 178], ["20", 249], ["0", 319.5], ["-20", 390], ["-40", 460]]} xLabels legend={[["Iqs", YEL], ["Ids", BLU]]} lx={454} ly={33} lw={67}>
          <Trace d={idsPath()} color={BLU} />
          <Trace d={iqsPath()} />
        </Plot>
      </ScopeWindow>

      <ScopeWindow title="Scope14" className="left-[1884px] top-[212px] h-[505px] w-[560px]">
        <Plot id="vqs" w={560} h={397} px={25} py={22} pw={518} ph={353} title="Vqs, Vds" titleY={18} yTicks={[["200", 15], ["150", 52.7], ["100", 90.7], ["50", 128.7], ["0", 166], ["-50", 204], ["-100", 242], ["-150", 280], ["-200", 318]]} xLabels legend={[["Vqs", YEL], ["Vds", BLU]]} lx={462.6} ly={33} lw={68}>
          <VqsTrace />
        </Plot>
      </ScopeWindow>

      <ScopeWindow title="Scope15" className="left-[1885px] top-[755px] h-[505px] w-[560px]">
        <Plot id="hall" w={560} h={397} px={18} py={22} pw={525} ph={353} title="Ha, Hb, Hc" titleY={17} yTicks={[["1", 35], ["0.8", 91.5], ["0.6", 148], ["0.4", 205], ["0.2", 261], ["0", 318]]} xLabels legend={[["Ha", YEL], ["Hb", BLU], ["Hc", ORG]]} lx={467} ly={33} lw={64}>
          <g shapeRendering="crispEdges">
            <Trace d={hallWave(11, true)} width={1.2} />
            <Trace d={hallWave(6.1, false)} color={BLU} width={1.2} />
            <Trace d={hallWave(1.15, true)} color={ORG} width={1.2} />
          </g>
        </Plot>
      </ScopeWindow>

      <ScopeWindow title="Scope16" active status={false} className="left-[279px] top-[629px] h-[760px] w-[1077px]">
        <Plot id="wm" w={1077} h={249} px={25.4} py={20} pw={1034.6} ph={214} title="Wm" titleY={15} yTicks={[["100", 37], ["0", 79], ["-100", 120.5], ["-200", 162.5], ["-300", 204.5]]} legend={[["Wm", YEL]]} lx={979} ly={31} lw={75}>
          <Trace d={wmPath} />
        </Plot>
        <Plot id="theta" w={1077} h={245} px={25.4} py={20} pw={1034.6} ph={211} title="Theta" titleY={14} yTicks={[["8", 8], ["6", 47.5], ["4", 85], ["2", 126], ["0", 164], ["-2", 204]]} legend={[["Theta", YEL]]} lx={970} ly={28} lw={84}>
          <Trace d={thetaPath} />
        </Plot>
        <Plot id="te" w={1077} h={220} px={25.4} py={20} pw={1034.6} ph={190} title="Te" titleY={14} yTicks={[["150", 20], ["100", 55.5], ["50", 90], ["0", 125]]} legend={[["Te", YEL]]} lx={986} ly={29} lw={68}>
          <Trace d={tePath} width={1.7} />
        </Plot>
      </ScopeWindow>

      {/* input method bar */}
      <div className="absolute left-[2384px] top-[1093px] flex h-[25px] w-[92px] items-center border border-[#c8dcf0] bg-white pl-[12px]">
        <span className="text-[20px] leading-none text-[#2878c8]">A</span>
        <span className="ml-[9px] text-[15px] font-bold leading-none text-[#2878c8]">•,</span>
        <svg width="14" height="18" viewBox="0 0 14 18" className="ml-[10px]" fill="none">
          <rect x="4" y="1" width="6" height="10" rx="3" fill="#2878c8" />
          <path d="M2 7C2 14 12 14 12 7M7 12V17M4 17H10" stroke="#2878c8" strokeWidth="1.4" />
        </svg>
        <svg width="12" height="12" viewBox="0 0 12 12" className="ml-[7px]" fill="#2878c8">
          <rect width="12" height="12" rx="2" />
          <path d="M2 3H5V5H2ZM7 3H10V5H7ZM2 7H5V9H2ZM7 7H10V9H7Z" fill="#fff" />
        </svg>
      </div>
      <div className="absolute left-[2360px] top-[1091px] flex h-[26px] w-[28px] -rotate-6 items-center justify-center rounded-[5px] bg-[#ee4a16] text-[22px] font-bold italic leading-none text-white">S</div>

      <span className="absolute left-[2368px] top-[1340px] text-[12px] text-[#8a8a8a]">CSDN @ykmjocz</span>
    </div>
  );
}
